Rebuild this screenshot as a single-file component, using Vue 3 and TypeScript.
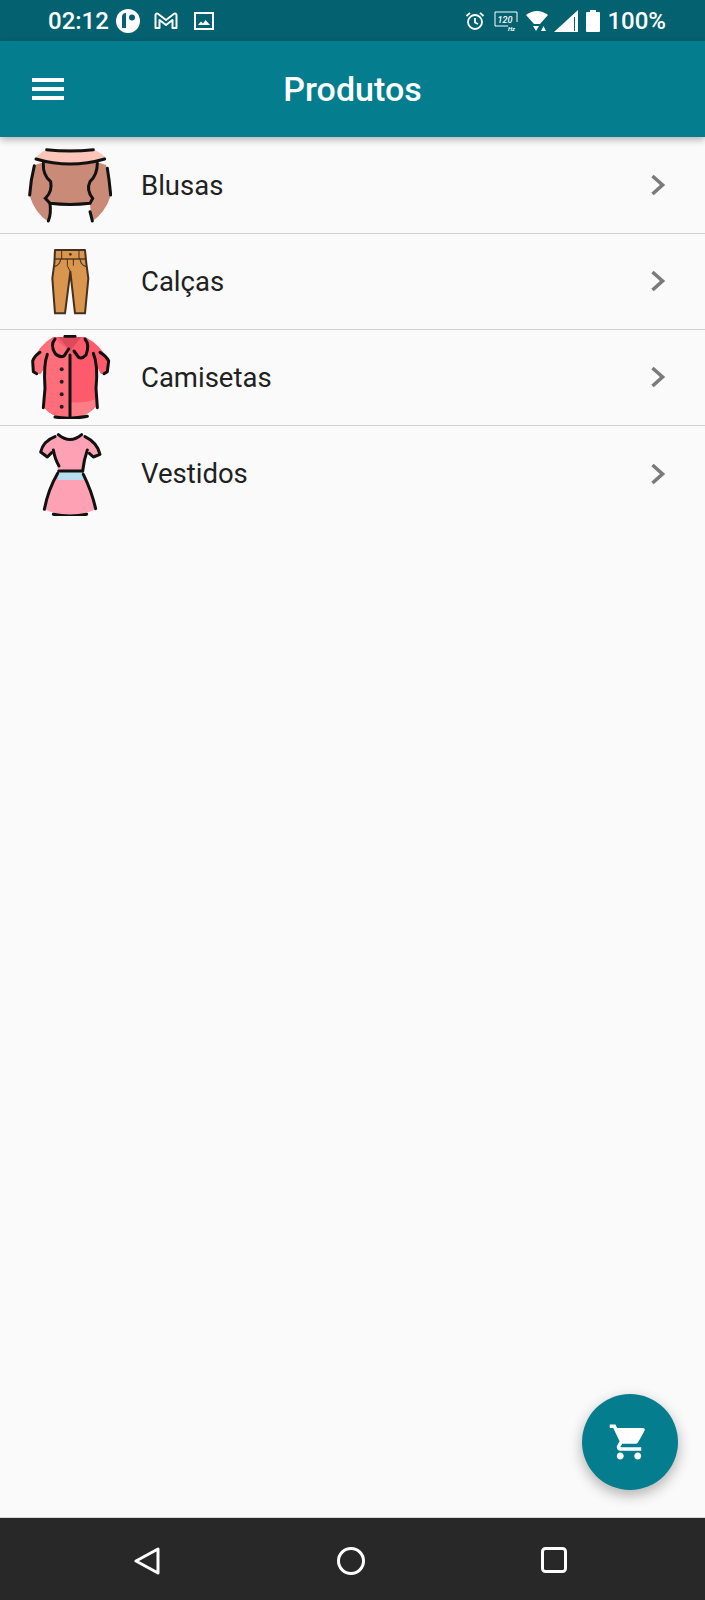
<script setup lang="ts">
const categories = [
  { name: 'Blusas', kind: 'blouse' },
  { name: 'Calças', kind: 'pants' },
  { name: 'Camisetas', kind: 'shirt' },
  { name: 'Vestidos', kind: 'dress' },
];
</script>

<template>
  <div class="screen">
    <div class="status">
      <div class="status-left">
        <span class="clock">02:12</span>
        <svg class="st-p" viewBox="0 0 24 24">
          <circle cx="12" cy="12" r="12" fill="#fff" />
          <path d="M6 19V8a4 4 0 0 1 4-4v15z" fill="#04616f" />
          <circle cx="16" cy="8.500" r="3" fill="#04616f" />
        </svg>
        <svg class="st-m" viewBox="0 0 24 18" fill="none" stroke="#fff" stroke-width="2" stroke-linejoin="round">
          <path d="M1.500 3a1.500 1.500 0 0 1 2.400-1.200L12 8l8.100-6.200A1.500 1.500 0 0 1 22.500 3v13h-4V8L12 13 5.500 8v8h-4z" />
        </svg>
        <svg class="st-img" viewBox="0 0 20 18">
          <rect x="1" y="1" width="18" height="16" fill="none" stroke="#fff" stroke-width="2" />
          <path d="M4 13l3-3.500 2 2 2.500-3.500L16 13z" fill="#fff" />
        </svg>
      </div>
      <div class="status-right">
        <svg class="st-alarm" viewBox="0 0 20 20" fill="none" stroke="#fff" stroke-width="1.800">
          <circle cx="10" cy="11" r="7" />
          <path d="M10 7v4.500l3 1.500M1.500 5L5 1.800M18.500 5L15 1.800" />
        </svg>
        <svg class="st-hz" viewBox="0 0 24 20" fill="none">
          <path d="M14 15H1V1h22v10" stroke="#fff" stroke-width="1" />
          <text x="3.500" y="12" class="hz-num">120</text>
          <text x="14" y="20" class="hz-unit">Hz</text>
        </svg>
        <svg class="st-wifi" viewBox="0 0 22 22">
          <path d="M0 5Q11-3 22 5L14 14H8z" fill="#fff" />
          <path d="M7 16h6l-3 5zM15 21l2.500-5 2.500 5z" fill="#fff" />
        </svg>
        <svg class="st-signal" viewBox="0 0 24 22">
          <path d="M0 22L24 0v22z" fill="#fff" />
          <path d="M20.500 7v14" stroke="#04616f" stroke-width="1" />
        </svg>
        <svg class="st-batt" viewBox="0 0 14 22">
          <path d="M4 0h6v2h3a1 1 0 0 1 1 1v18a1 1 0 0 1-1 1H1a1 1 0 0 1-1-1V3a1 1 0 0 1 1-1h3z" fill="#fff" />
        </svg>
        <span class="pct">100%</span>
      </div>
    </div>

    <header class="appbar">
      <button class="menu" type="button" aria-label="Menu">
        <span></span><span></span><span></span>
      </button>
      <h1>Produtos</h1>
    </header>

    <main class="content">
      <ul class="list">
        <li v-for="cat in categories" :key="cat.name" class="row">
          <div class="thumb">
            <svg v-if="cat.kind === 'blouse'" viewBox="54 24 252 252">
              <path d="M75 90Q60 130 58 180Q75 235 115 260L120 205Q180 212 240 205L245 260Q285 235 303 180Q300 130 288 90Q180 50 75 90z" fill="#c98a78" />
              <path d="M108 44Q180 38 252 44Q280 56 288 72Q180 108 76 72Q84 56 108 44z" fill="#fcc5ba" />
              <g fill="none" stroke="#111" stroke-width="9" stroke-linecap="round">
                <path d="M110 44Q180 52 250 44" />
                <path d="M78 72Q180 102 284 72" />
                <path d="M73 92Q62 135 59 180" />
                <path d="M292 100Q298 135 302 180" />
                <path d="M100 85Q98 120 122 140Q128 170 106 190L120 205Q180 212 240 205L248 190Q228 165 240 140Q262 120 262 85" />
                <path d="M120 205Q124 235 115 258M240 230Q244 245 247 258" />
              </g>
            </svg>

            <svg v-else-if="cat.kind === 'pants'" viewBox="54 312 252 252">
              <path d="M135 345H225L229 385L235 430L225 535H195L181 410L165 535H135L127 430L133 385z" fill="#d9964e" stroke="#46301f" stroke-width="6" stroke-linejoin="round" />
              <path d="M134 372H228" stroke="#46301f" stroke-width="4" />
              <path d="M155 346V372M207 346V372M172 372V392L181 410M190 372V392" stroke="#46301f" stroke-width="3" fill="none" />
              <path d="M133 395Q150 390 152 372M229 395Q212 390 210 372" stroke="#46301f" stroke-width="3.500" fill="none" />
              <circle cx="181" cy="358" r="4" fill="#46301f" />
            </svg>

            <svg v-else-if="cat.kind === 'shirt'" viewBox="54 30 252 252">
              <path d="M130 36H226Q272 60 296 108L292 146L272 146L264 130Q258 190 262 240Q235 275 180 282Q125 278 100 245Q105 190 102 130L92 146L70 144L66 108Q90 60 130 36z" fill="#fd5b6b" />
              <path d="M66 108Q90 60 130 36L180 80V282Q125 278 100 245Q105 190 102 130L92 146L70 144z" fill="#ff6e7a" />
              <path d="M145 36H215L180 78z" fill="#dc4a5c" />
              <path d="M180 282Q235 275 262 240L258 222Q225 235 180 232z" fill="#ff7d87" />
              <g fill="none" stroke="#111" stroke-width="9" stroke-linecap="round" stroke-linejoin="round">
                <path d="M165 34H195" />
                <path d="M135 42Q120 60 135 85Q150 100 163 92L176 72" />
                <path d="M225 42Q240 60 228 90Q215 104 205 96L192 78" />
                <path d="M180 90V280" />
                <path d="M90 82Q74 92 68 108L70 140L80 146" />
                <path d="M270 82Q288 92 296 108L292 140L282 146" />
                <path d="M112 88Q100 120 105 190L100 248" />
                <path d="M250 85Q265 120 258 190L262 248" />
                <path d="M135 276Q180 284 232 274" />
              </g>
              <g fill="#222">
                <circle cx="155" cy="133" r="6" />
                <circle cx="155" cy="170" r="6" />
                <circle cx="155" cy="208" r="6" />
                <circle cx="155" cy="245" r="6" />
              </g>
            </svg>

            <svg v-else viewBox="54 318 252 252">
              <path d="M142 325Q180 350 217 325Q262 345 270 385L250 393L232 370Q222 400 218 435L258 550Q180 585 103 550L144 435Q140 400 130 370L114 393L92 378Q110 340 142 325z" fill="#ffa1b5" />
              <path d="M146 437H217L222 462H143z" fill="#b8dcf0" />
              <g fill="none" stroke="#111" stroke-width="9" stroke-linecap="round" stroke-linejoin="round">
                <path d="M145 326Q180 355 215 326" />
                <path d="M135 332Q100 345 92 378L112 393L125 380" />
                <path d="M225 332Q262 350 270 385L250 393L238 382" />
                <path d="M130 372Q135 400 147 420" />
                <path d="M232 372Q222 400 218 435" />
                <path d="M146 435H218" />
                <path d="M143 442Q115 490 103 550" />
                <path d="M220 445Q245 495 257 548" />
                <path d="M130 565Q180 575 230 565" />
              </g>
            </svg>
          </div>
          <span class="label">{{ cat.name }}</span>
          <svg class="chevron" viewBox="0 0 16 22" fill="none">
            <path d="M2.500 2l10 9-10 9" stroke="#7b7b7b" stroke-width="3.600" />
          </svg>
        </li>
      </ul>

      <button class="fab" type="button" aria-label="Carrinho">
        <svg viewBox="0 0 24 24" fill="#fff">
          <path d="M7 18c-1.100 0-1.990.9-1.990 2S5.900 22 7 22s2-.9 2-2-.9-2-2-2zM1 2v2h2l3.600 7.590-1.350 2.450c-.16.28-.25.61-.25.96 0 1.100.9 2 2 2h12v-2H7.420c-.14 0-.25-.11-.25-.25l.03-.12.9-1.630h7.450c.75 0 1.410-.41 1.750-1.030l3.580-6.470c.08-.14.12-.31.12-.48 0-.55-.45-1-1-1H5.210l-.94-2H1zm16 16c-1.100 0-1.990.9-1.990 2s.89 2 1.990 2 2-.9 2-2-.9-2-2-2z" />
        </svg>
      </button>
    </main>

    <nav class="navbar">
      <svg class="nav-back" viewBox="0 0 26 28" fill="none" stroke="#fff" stroke-width="3" stroke-linejoin="round">
        <path d="M24 2v24L2 14z" />
      </svg>
      <svg class="nav-home" viewBox="0 0 28 28" fill="none" stroke="#fff" stroke-width="3">
        <circle cx="14" cy="14" r="12.500" />
      </svg>
      <svg class="nav-recent" viewBox="0 0 26 26" fill="none" stroke="#fff" stroke-width="3">
        <rect x="1.500" y="1.500" width="23" height="23" rx="3" />
      </svg>
    </nav>
  </div>
</template>

<style>
html,
body {
  margin: 0;
  background: #fafafa;
}
</style>

<style scoped>
.screen {
  width: 705px;
  height: 1600px;
  display: flex;
  flex-direction: column;
  font-family: Roboto, "Liberation Sans", sans-serif;
  background: #fafafa;
  overflow: hidden;
}

.status {
  height: 41px;
  flex: none;
  background: #04616f;
  display: flex;
  align-items: center;
  justify-content: space-between;
  padding: 0 39px 0 48px;
  color: #fff;
  font-size: 24px;
  font-weight: 500;
}

.status svg {
  display: block;
}

.status-left,
.status-right {
  display: flex;
  align-items: center;
}

.clock {
  width: 68px;
}

.st-p {
  width: 24px;
  height: 24px;
}

.st-m {
  width: 24px;
  height: 18px;
  margin-left: 14px;
}

.st-img {
  width: 20px;
  height: 18px;
  margin-left: 16px;
}

.st-alarm {
  width: 20px;
  height: 20px;
}

.st-hz {
  width: 24px;
  height: 20px;
  margin-left: 9px;
}

.hz-num {
  fill: #fff;
  font-size: 9px;
  font-style: italic;
  font-weight: 500;
}

.hz-unit {
  fill: #fff;
  font-size: 6px;
  font-style: italic;
  font-weight: 700;
}

.st-wifi {
  width: 22px;
  height: 22px;
  margin-left: 8px;
}

.st-signal {
  width: 24px;
  height: 22px;
  margin-left: 6px;
}

.st-batt {
  width: 14px;
  height: 22px;
  margin-left: 8px;
}

.pct {
  margin-left: 7px;
}

.appbar {
  height: 96px;
  flex: none;
  background: #047d8e;
  position: relative;
  z-index: 1;
  display: flex;
  align-items: center;
  justify-content: center;
  box-shadow: 0 3px 7px rgba(0, 0, 0, 0.28);
}

.appbar h1 {
  margin: 0;
  color: #fff;
  font-size: 34px;
  font-weight: 500;
}

.menu {
  position: absolute;
  left: 32px;
  top: 37px;
  width: 32px;
  height: 22px;
  padding: 0;
  border: 0;
  background: none;
  display: flex;
  flex-direction: column;
  justify-content: space-between;
}

.menu span {
  display: block;
  height: 4px;
  background: #fff;
}

.content {
  flex: 1;
  position: relative;
}

.list {
  list-style: none;
  margin: 1px 0 0;
  padding: 0;
}

.row {
  box-sizing: border-box;
  height: 96px;
  padding: 0 39px 1px 28px;
  border-bottom: 1px solid #cfcfcf;
  display: flex;
  align-items: center;
}

.row:last-child {
  border-bottom: 0;
}

.thumb {
  width: 84px;
  height: 84px;
  flex: none;
}

.thumb svg {
  display: block;
  width: 84px;
  height: 84px;
}

.label {
  flex: 1;
  margin-left: 29px;
  font-size: 27.500px;
  color: #212121;
}

.chevron {
  width: 16px;
  height: 22px;
}

.fab {
  position: absolute;
  right: 27px;
  bottom: 27px;
  width: 96px;
  height: 96px;
  padding: 0;
  border: 0;
  border-radius: 50%;
  background: #047d8e;
  display: flex;
  align-items: center;
  justify-content: center;
  box-shadow: 0 5px 14px rgba(0, 0, 0, 0.3);
}

.fab svg {
  width: 42px;
  height: 42px;
  margin-right: 2px;
}

.navbar {
  height: 83px;
  flex: none;
  background: #282828;
  position: relative;
  border-top: 1px solid #d8d8d8;
  box-sizing: border-box;
}

.navbar svg {
  position: absolute;
  top: 29px;
}

.nav-back {
  left: 134px;
  width: 26px;
  height: 28px;
}

.nav-home {
  left: 337px;
  width: 28px;
  height: 28px;
}

.nav-recent {
  left: 541px;
  width: 26px;
  height: 26px;
}
</style>
